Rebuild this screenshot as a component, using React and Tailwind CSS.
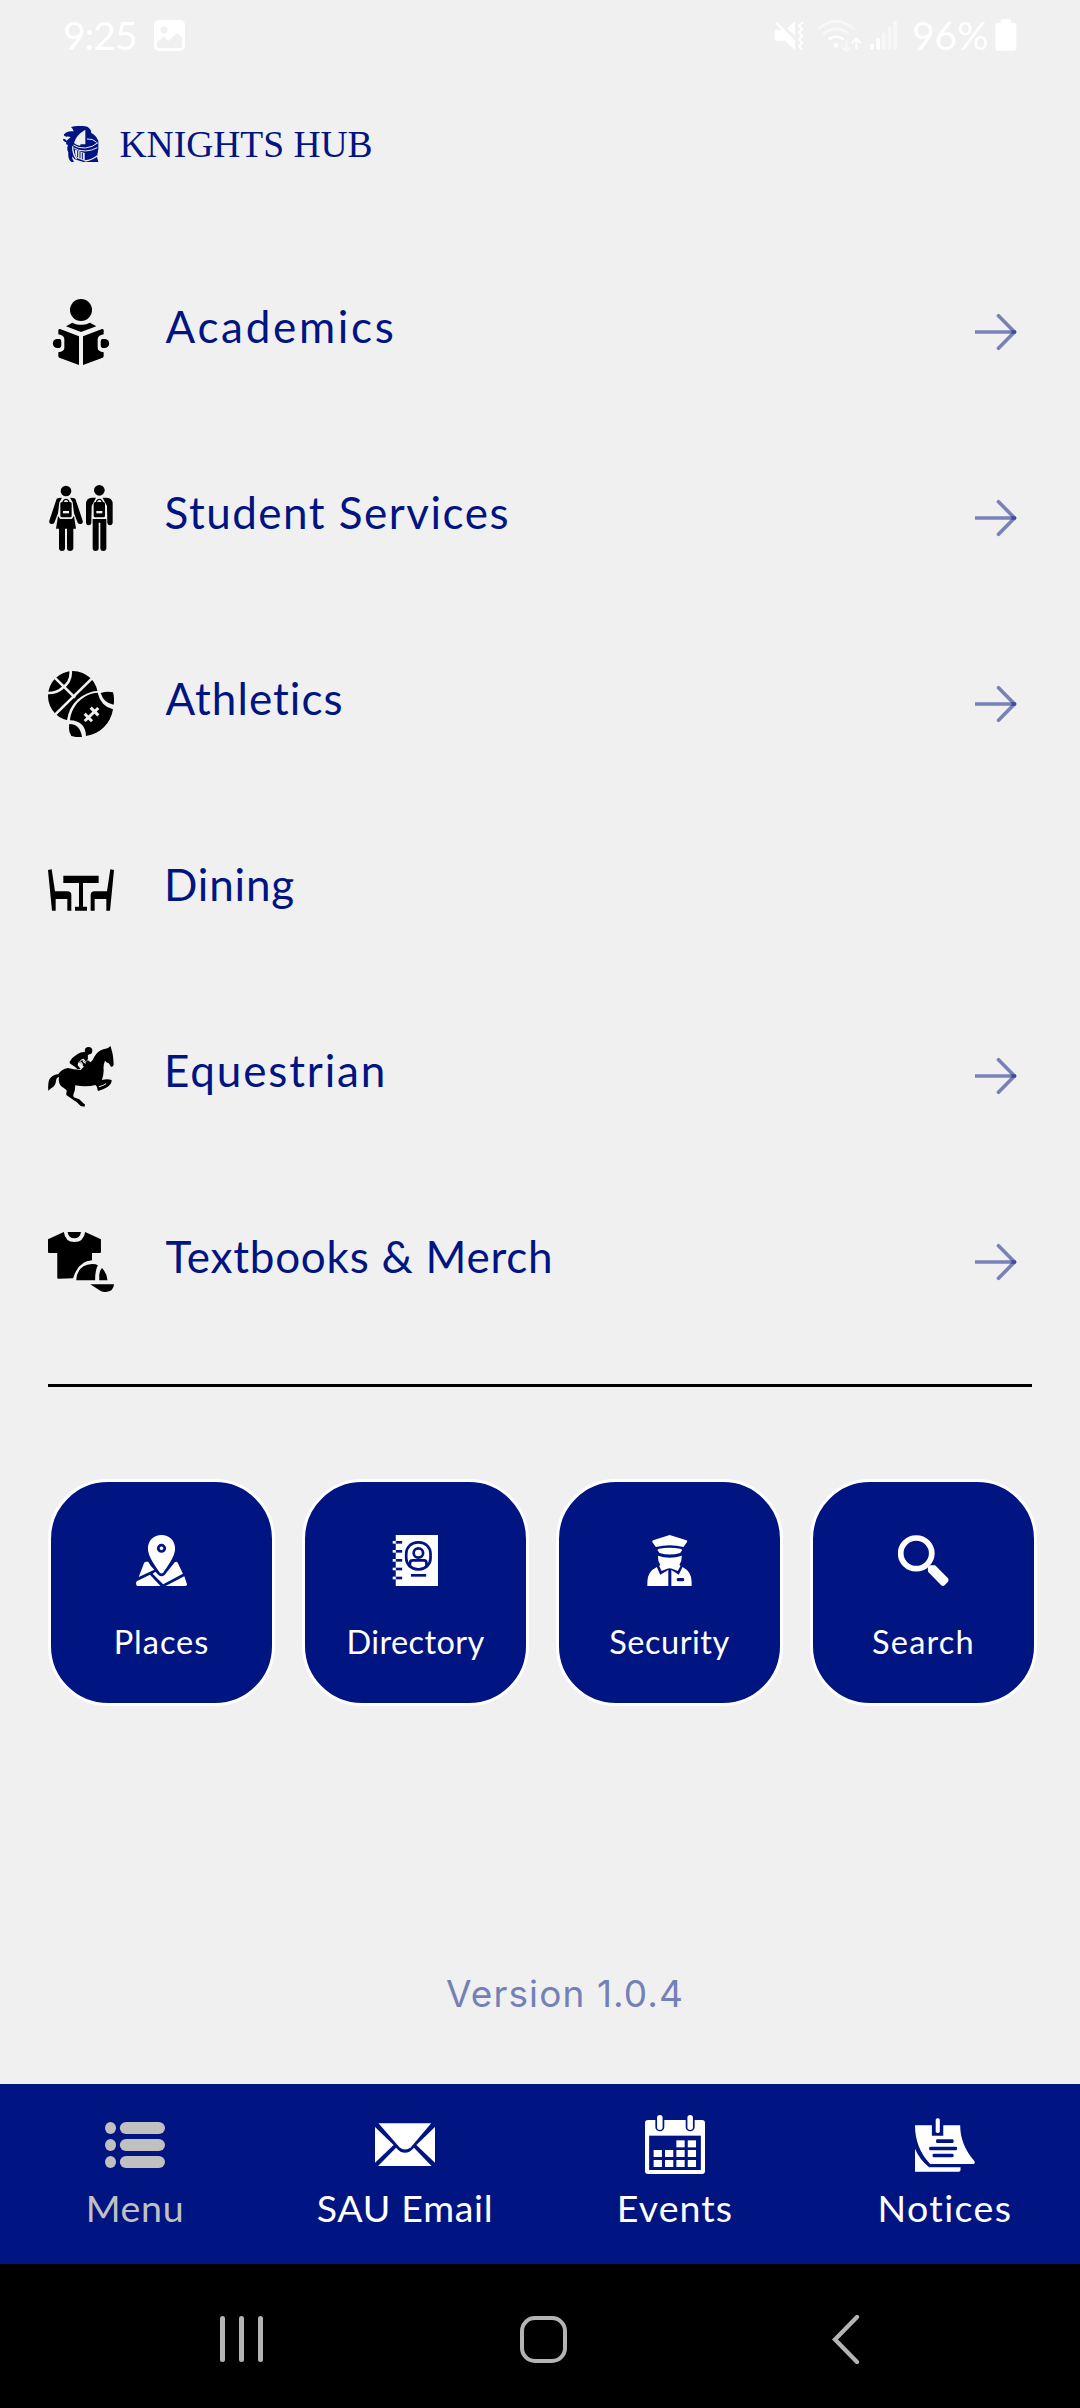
const BG = '#f0f0f0'
const NAVY = '#001482'

function ImageIcon() {
  return (
    <svg className="h-[31px] w-[31px]" viewBox="0 0 31 31">
      <rect width="31" height="31" rx="5" fill="#fff" />
      <circle cx="10" cy="10" r="3.5" fill={BG} />
      <path d="M3 22L10 16.5L14.500 21L23 13L28 17.500V26Q28 28 26 28H5Q3 28 3 26Z" fill={BG} />
    </svg>
  )
}

function MuteIcon() {
  return (
    <svg className="h-[31px] w-[30px]" viewBox="101 58 90 92" fill="#fff">
      <path d="M103 95Q103 87 110 87H125L164 126V147L133 120H110Q103 120 103 113Z" />
      <path d="M140 82L164 62V104Z" />
      <path d="M110 68L162 120" stroke="#fff" strokeWidth="6" strokeLinecap="round" />
      <path
        d="M186 65L176 75L186 85L176 95L186 105L176 116L186 126L176 136L184 144"
        fill="none"
        stroke="#fff"
        strokeWidth="6"
        strokeLinecap="round"
        strokeLinejoin="round"
      />
    </svg>
  )
}

function WifiIcon() {
  return (
    <svg className="h-[35px] w-[45px]" viewBox="231 50 135 104" fill="none" stroke="#fff" strokeWidth="8" strokeLinecap="round">
      <g opacity="0.5">
        <path d="M237 81Q288 37 340 81" />
        <path d="M252 97Q288 67 325 97" />
        <path d="M319 118V147M309 139L319 149L329 139" strokeWidth="7" />
      </g>
      <path d="M269 112Q288 98 308 112" />
      <circle cx="288" cy="131" r="7" fill="#fff" stroke="none" />
      <path d="M349 141V114M337 123L349 111L361 123" strokeWidth="6" />
    </svg>
  )
}

function SignalIcon() {
  return (
    <svg className="h-[31px] w-[28px]" viewBox="392 58 84 92" fill="#fff">
      <rect x="393" y="129" width="11" height="18" rx="4" />
      <rect x="411" y="112" width="11" height="35" rx="4" />
      <g opacity="0.5">
        <rect x="428" y="95" width="11" height="52" rx="4" />
        <rect x="445" y="76" width="11" height="71" rx="4" />
        <rect x="462" y="60" width="11" height="87" rx="4" />
      </g>
    </svg>
  )
}

function BatteryIcon() {
  return (
    <svg className="h-[32px] w-[22px]" viewBox="767 56 66 96" fill="#fff">
      <rect x="768" y="68" width="63" height="83" rx="8" />
      <rect x="784" y="57" width="32" height="16" rx="4" />
    </svg>
  )
}

function KnightLogo() {
  return (
    <svg className="h-[36px] w-[36px]" viewBox="39 47 108 108">
      <path
        d="M68 56L63 50Q90 44 112 49Q123 55 124 68Q139 76 145 92V116L141 140L145 154V156H66Q53 148 55 126Q49 116 54 104Q46 104 49 96Q39 93 39 87L49 79Q40 78 42 72Q52 60 71 63Z"
        fill={NAVY}
      />
      <g fill={BG}>
        <path d="M38 84Q50 75 62 80L50 91Q46 85 38 84Z" />
        <path d="M72 98Q78 74 106 58V102H92L90 106Q78 104 72 98Z" />
        <path d="M75 118L104 128V152L82 144Q74 134 75 118Z" />
        <path d="M72 155Q66 148 66 138L74 147L100 155Z" />
      </g>
      <g fill="none" stroke={BG}>
        <path d="M70 104Q84 114 106 113Q128 111 144 97" strokeWidth="3" />
        <path d="M72 113Q84 122 106 122Q126 121 142 112" strokeWidth="3" />
        <path d="M111 86Q128 84 140 96" strokeWidth="3" />
        <path d="M104 152Q126 149 142 136" strokeWidth="4" />
        <path d="M68 108Q68 134 80 146" strokeWidth="4" />
      </g>
      <path d="M83 121V141M90 124V144M97 127V147" fill="none" stroke={NAVY} strokeWidth="3" />
    </svg>
  )
}

function AcademicsIcon() {
  const half = (
    <>
      <path d="M90 147L147 169V255L88 233Q85 232 85 229V217Q103 214 103 204V177Q103 167 85 163V150Q86 146 90 147Z" />
      <path d="M82 177H89Q94 178 94 185V196Q94 203 89 204H82A13.500 13.500 0 0 1 82 177Z" />
    </>
  )
  return (
    <svg className="h-[66px] w-[66px]" viewBox="54 57 198 198">
      <circle cx="153" cy="90" r="33" />
      <path d="M108 139L127 128Q140 136 153 134Q166 136 180 128L199 139L153 156Z" />
      {half}
      <g transform="translate(306 0) scale(-1 1)">{half}</g>
    </svg>
  )
}

function Backpack({ cx }) {
  return (
    <g transform={`translate(${cx} 0)`}>
      <path d="M-17 716L-22 700L-15 668Q-12 656 0 656Q12 656 15 668L22 700L17 716Z" fill={BG} />
      <path d="M-9 667Q-7 658 0 658Q7 658 9 667" fill="none" stroke="#000" strokeWidth="4" />
      <rect x="-17" y="666" width="34" height="46" rx="5" />
      <rect x="-9" y="693" width="18" height="7" fill={BG} />
    </g>
  )
}

function StudentsIcon() {
  return (
    <svg className="h-[66px] w-[66px]" viewBox="54 615 198 198">
      <circle cx="108" cy="633" r="16" />
      <path d="M80 656Q84 653 96 653L88 667L84 700L73 728Q70 733 63 732Q56 730 58 722Z" />
      <path d="M136 656Q132 653 120 653L128 667L132 700L143 728Q146 733 153 732Q160 730 158 722Z" />
      <path d="M84 708L90 716H126L132 708L138 746H130V806Q128 813 120 813Q112 813 111 806V746H105V806Q104 813 96 813Q88 813 87 806V746H78Z" />
      <Backpack cx={108} />
      <circle cx="208" cy="631" r="16" />
      <path d="M198 653H186Q168 653 168 673V729Q169 736 176 736Q183 736 184 729L185 678Z" />
      <path d="M218 653H230Q248 653 248 673V729Q247 736 240 736Q233 736 232 729L231 678Z" />
      <path d="M188 717H229V806Q228 813 220 813Q212 813 211 806V728H206V806Q205 813 197 813Q189 813 188 806Z" />
      <Backpack cx={208} />
    </svg>
  )
}

function AthleticsIcon() {
  return (
    <svg className="h-[66px] w-[66px]" viewBox="54 63 198 198">
      <circle cx="129" cy="138" r="75" />
      <g fill="none" stroke={BG} strokeWidth="8">
        <path d="M74 83L135 143" />
        <path d="M186 85L76 193" />
        <path d="M122 61Q125 95 98 113Q80 130 52 129" />
      </g>
      <path
        d="M118 211C125 165 160 132 206 129L230 120L256 122L254 175C246 222 210 254 168 261L140 266L114 262Z"
        stroke={BG}
        strokeWidth="14"
        fill={BG}
      />
      <path d="M120 211C125 165 160 131 203 128Q212 168 249 178C242 222 210 252 168 258C168 230 150 211 120 211Z" />
      <path d="M212 129Q232 123 249 127Q254 145 251 164Q222 160 212 129Z" />
      <path d="M118 222Q150 222 156 261Q140 263 124 258Q114 245 118 222Z" />
      <g stroke={BG} strokeWidth="9">
        <path d="M164 213L205 174" />
        <path d="M164 191L186 214" />
        <path d="M182 173L205 196" />
      </g>
    </svg>
  )
}

function DiningIcon() {
  const chair = <path d="M54 660L65 658L75 724H112Q124 724 124 735V782H112V747H77V782H66Z" />
  return (
    <svg className="h-[66px] w-[66px]" viewBox="54 621 198 198">
      {chair}
      <g transform="translate(306 0) scale(-1 1)">{chair}</g>
      <path d="M100 677H206V699H159V770H171V782H135V770H147V699H100Z" />
    </svg>
  )
}

function EquestrianIcon() {
  return (
    <svg className="h-[66px] w-[66px]" viewBox="52 39 192 198" preserveAspectRatio="none">
      <path d="M234 48L237 60Q242 75 243 104Q241 112 235 110L229 100Q220 97 218 92Q212 105 214 120Q214 135 209 150Q225 145 237 150Q238 158 232 164Q222 176 197 183L195 173Q194 168 190 165Q165 172 131 166Q132 180 127 190Q124 196 127 202L143 208L152 217L160 224L158 230L147 228L136 217L106 196Q104 190 107 183Q105 178 98 174Q80 165 84 141Q76 142 75 155Q73 168 62 174L53 182Q51 165 55 150Q62 135 82 132Q92 117 110 114Q125 118 147 120L163 103Q180 98 186 82Q195 63 215 57Q225 58 234 48Z" />
      <path d="M200 170Q214 167 221 161" fill="none" stroke={BG} strokeWidth="3" />
      <circle cx="170" cy="62" r="11" />
      <path d="M164 67Q150 64 138 72Q122 82 115 95Q114 100 118 102L130 110L138 118L147 117L138 105L141 96L150 88L156 86L162 95L168 88V76L174 70Z" />
      <path d="M142 96L150 102L156 110L168 104L176 97L168 91L161 97L152 90Z" />
      <path d="M146 95L153 104M153 91Q155 97 162 100" fill="none" stroke={BG} strokeWidth="3" />
    </svg>
  )
}

function MerchIcon() {
  return (
    <svg className="h-[66px] w-[66px]" viewBox="52 597 192 198" preserveAspectRatio="none">
      <path d="M52 628L98 606Q102 636 129 636Q156 636 160 606L206 628V666Q206 669 203 669H180V691Q140 693 125 745L82 746Q79 746 79 743V669H55Q52 669 52 666Z" />
      <path d="M109 606H148Q145 625 129 625Q112 625 109 606Z" />
      <path d="M134 751Q137 705 180 702Q192 702 197 706Q189 720 189 751Z" />
      <path d="M201 751V735Q202 722 209 714Q223 728 225 751Z" />
      <path d="M175 763H244Q243 785 220 786Q210 786 204 782Z" />
    </svg>
  )
}

function PlacesIcon() {
  return (
    <svg className="h-[51px] w-[51px]" viewBox="314 495 150 153" preserveAspectRatio="none" fill="#fff">
      <path d="M338 578Q340 575 345 575H350Q357 590 368 599L322 621Z" />
      <path d="M316 634L355 614L386 648H317Q312 641 316 634Z" />
      <path d="M363 611L371 605L380 615Q389 623 398 615L428 577Q434 573 437 579L452 611L394 643Z" />
      <path d="M401 648L456 619L464 643Q464 648 459 648Z" />
      <path d="M389 495C412 495 429 512 429 536C429 560 405 590 395 607Q389 614 383 607C373 590 349 560 349 536C349 512 366 495 389 495Z" />
      <circle cx="389" cy="535" r="9.500" fill="none" stroke={NAVY} strokeWidth="8" />
    </svg>
  )
}

function DirectoryIcon() {
  return (
    <svg className="h-[51px] w-[51px]" viewBox="1065 495 151 153" preserveAspectRatio="none" fill="#fff">
      <rect x="1082" y="495" width="125" height="153" />
      {[517, 544, 571, 597, 624].map((y) => (
        <g key={y}>
          <rect x="1073" y={y - 4} width="9" height="8" />
          <rect x="1083" y={y - 4} width="18" height="8" fill={NAVY} />
        </g>
      ))}
      <g fill="none" stroke={NAVY} strokeWidth="8">
        <rect x="1113" y="517" width="72" height="81" rx="34" />
        <circle cx="1149" cy="549" r="14" />
        <path d="M1124 592V580Q1124 571 1132 571H1166Q1173 571 1173 580V592" />
      </g>
      <rect x="1127" y="612" width="45" height="8" fill={NAVY} />
    </svg>
  )
}

function SecurityIcon() {
  return (
    <svg className="h-[51px] w-[51px]" viewBox="277 495 151 153" preserveAspectRatio="none" fill="#fff">
      <path d="M353 495L403 511Q407 513 404 517L394 531Q353 520 312 531L302 517Q300 513 304 511Z" />
      <path d="M317 541Q317 536 322 536Q353 530 384 536Q389 537 390 541L384 549Q353 558 323 549Z" />
      <path d="M318 557Q353 569 389 557Q389 573 382 584L385 588L377 603L362 597Q353 592 344 597L329 603L322 588L325 584Q318 573 318 557Z" />
      <path d="M315 591L325 614L349 600V648H287V635Q287 605 315 591Z" />
      <path d="M391 591L380 614L358 600V648H418V635Q418 605 391 591Z" />
      <rect x="374" y="624" width="22" height="10" rx="4" fill={NAVY} />
    </svg>
  )
}

function SearchIcon() {
  return (
    <svg className="h-[51px] w-[51px]" viewBox="1033 495 151 153" preserveAspectRatio="none" fill="#fff">
      <circle cx="1087" cy="550" r="46" fill="none" stroke="#fff" strokeWidth="17" />
      <path d="M1121 590L1129 586L1143 586L1181 625Q1184 630 1181 635L1171 646Q1166 650 1161 646L1122 605Z" />
    </svg>
  )
}

function MenuIcon() {
  return (
    <svg className="h-[60px] w-[60px]" viewBox="305 135 174 180" preserveAspectRatio="none" fill="#c0c0c0">
      {[174, 225, 276].map((y) => (
        <g key={y}>
          <ellipse cx="321" cy={y} rx="16" ry="18" />
          <rect x="348" y={y - 18} width="131" height="36" rx="18" />
        </g>
      ))}
    </svg>
  )
}

function EmailIcon() {
  return (
    <svg className="h-[60px] w-[60px]" viewBox="1089 135 174 180" preserveAspectRatio="none" fill="#fff">
      <path d="M1099 160H1252L1193 232Q1176 245 1160 232Z" />
      <path d="M1089 171L1143 225L1089 278Z" />
      <path d="M1263 171L1209 225L1263 278Z" />
      <path d="M1098 288L1150 233Q1176 264 1202 233L1253 288Z" />
    </svg>
  )
}

// Filled day cells, column starts for each week row
const DAY_CELLS = [
  { y: 211, cols: [396, 429] },
  { y: 240, cols: [330, 363, 396, 429] },
  { y: 270, cols: [330, 363, 396, 429] },
]

function EventsIcon() {
  return (
    <svg className="h-[60px] w-[60px]" viewBox="305 135 174 180" preserveAspectRatio="none" fill="#fff">
      <rect x="305" y="150" width="174" height="162" rx="9" />
      <rect x="317" y="197" width="150" height="103" fill={NAVY} />
      {[348, 436].map((x) => (
        <g key={x}>
          <rect x={x - 13} y="135" width="26" height="49" rx="13" fill={NAVY} />
          <rect x={x - 8} y="135" width="16" height="45" rx="8" />
        </g>
      ))}
      {DAY_CELLS.map(({ y, cols }) => cols.map((x) => <rect key={`${x}-${y}`} x={x} y={y} width="24" height="21" />))}
    </svg>
  )
}

function NoticesIcon() {
  return (
    <svg className="h-[60px] w-[60px]" viewBox="1089 135 174 180" preserveAspectRatio="none" fill="#fff">
      <path d="M1089 166H1138V197H1171V166H1220Q1220 225 1261 273Q1265 280 1258 282H1133Q1089 235 1089 166Z" />
      <path d="M1089 236Q1102 268 1130 292H1221V300Q1221 305 1216 305H1089Z" />
      <rect x="1149" y="145" width="12" height="44" rx="5" />
      <g fill={NAVY}>
        <rect x="1150" y="208" width="51" height="11" rx="4" />
        <rect x="1130" y="230" width="81" height="11" rx="4" />
        <rect x="1140" y="251" width="61" height="11" rx="4" />
      </g>
    </svg>
  )
}

function ArrowIcon() {
  return (
    <svg className="h-[42px] w-[42px]" viewBox="0 0 42 42" fill="none" stroke={NAVY} strokeOpacity="0.5" strokeWidth="3.600">
      <path d="M0 21H41" />
      <path d="M23.500 4.700L39.500 21L23.500 37.300" strokeLinecap="round" />
    </svg>
  )
}

const LINKS = [
  { label: 'Academics', Icon: AcademicsIcon, text: 'ml-[51.500px] tracking-[2.7px]', arrow: true },
  { label: 'Student Services', Icon: StudentsIcon, text: 'ml-[50.500px] tracking-[1.5px]', arrow: true },
  { label: 'Athletics', Icon: AthleticsIcon, text: 'ml-[51.500px] tracking-[1.05px]', arrow: true },
  { label: 'Dining', Icon: DiningIcon, text: 'ml-[50px] tracking-[0.8px]', arrow: false },
  { label: 'Equestrian', Icon: EquestrianIcon, text: 'ml-[50px] tracking-[1.85px]', arrow: true },
  { label: 'Textbooks & Merch', Icon: MerchIcon, text: 'ml-[51.500px] tracking-[0.75px]', arrow: true },
]

const TILES = [
  { label: 'Places', Icon: PlacesIcon, text: 'tracking-[1px]' },
  { label: 'Directory', Icon: DirectoryIcon, text: 'tracking-[0.4px]' },
  { label: 'Security', Icon: SecurityIcon, text: 'tracking-[0.5px]' },
  { label: 'Search', Icon: SearchIcon, text: 'tracking-[1.2px]' },
]

const TABS = [
  { label: 'Menu', Icon: MenuIcon, text: 'text-[#c0c0c0] tracking-[0.7px]' },
  { label: 'SAU Email', Icon: EmailIcon, text: 'text-white tracking-[0.7px]' },
  { label: 'Events', Icon: EventsIcon, text: 'text-white tracking-[1.1px]' },
  { label: 'Notices', Icon: NoticesIcon, text: 'text-white tracking-[1.4px]' },
]

function StatusBar() {
  return (
    <div className="flex h-[70px] items-center justify-between pr-[63px] pl-[63px] text-[39px] leading-none text-white">
      <div className="flex items-center gap-[18px]">
        <span className="w-[73px] tracking-[-1px]">9:25</span>
        <ImageIcon />
      </div>
      <div className="flex items-center">
        <MuteIcon />
        <span className="ml-[13px]"><WifiIcon /></span>
        <span className="ml-[8px]"><SignalIcon /></span>
        <span className="ml-[14px] w-[77px]">96%</span>
        <span className="ml-[6px]"><BatteryIcon /></span>
      </div>
    </div>
  )
}

function LinkRow({ label, Icon, text, arrow }) {
  return (
    <div className="flex h-[186px] items-center pr-[63px] pl-12">
      <Icon />
      <span className={`pb-[12px] text-[44px] leading-[52px] whitespace-nowrap text-[#001482] ${text}`}>{label}</span>
      {arrow && <span className="ml-auto"><ArrowIcon /></span>}
    </div>
  )
}

function Tile({ label, Icon, text }) {
  return (
    <div className="flex h-[227px] w-[227px] flex-col items-center rounded-[60px] border-[3px] border-white bg-[#001482] pt-[53px]">
      <Icon />
      <span className={`mt-[36px] text-[32.500px] leading-[39px] text-white ${text}`}>{label}</span>
    </div>
  )
}

function SystemNav() {
  return (
    <div className="flex h-36 items-center bg-black pt-[6px] pl-[220px]">
      <div className="flex gap-[14.500px]">
        <span className="h-[46px] w-[4.500px] rounded-full bg-[#b4b4b4]" />
        <span className="h-[46px] w-[4.500px] rounded-full bg-[#b4b4b4]" />
        <span className="h-[46px] w-[4.500px] rounded-full bg-[#b4b4b4]" />
      </div>
      <span className="ml-[257.500px] h-[47px] w-[47px] rounded-[15px] border-[4px] border-[#b4b4b4]" />
      <svg className="ml-[265px] h-[49px] w-[28px]" viewBox="0 0 28 49" fill="none" stroke="#b4b4b4" strokeWidth="4.300">
        <path d="M25 2L3 24.500L25 47" strokeLinecap="round" />
      </svg>
    </div>
  )
}

export default function App() {
  return (
    <div className="flex h-[2408px] w-[1080px] flex-col overflow-hidden bg-[#f0f0f0] font-['Lato',sans-serif]">
      <StatusBar />

      <header className="flex h-[169px] items-start pt-[56px] pl-[63px]">
        <KnightLogo />
        <h1 className="mt-[-3px] ml-[20.500px] font-['Liberation_Serif',serif] text-[37.500px] leading-[43px] whitespace-nowrap text-[#001482]">
          KNIGHTS HUB
        </h1>
      </header>

      <nav>
        {LINKS.map((link) => (
          <LinkRow key={link.label} {...link} />
        ))}
      </nav>

      <div className="mx-12 mt-[29px] h-[3px] shrink-0 bg-black" />

      <div className="mt-[92px] flex gap-[27px] pl-12">
        {TILES.map((tile) => (
          <Tile key={tile.label} {...tile} />
        ))}
      </div>

      <p className="mt-auto mb-[68px] pl-[446px] font-['Inter',sans-serif] text-[37px] leading-[44px] tracking-[1.1px] text-[#7480b8]">
        Version 1.0.4
      </p>

      <div className="grid h-[180px] shrink-0 grid-cols-4 bg-[#001482]">
        {TABS.map(({ label, Icon, text }) => (
          <div key={label} className="flex flex-col items-center pt-[31px]">
            <Icon />
            <span className={`mt-[10px] text-[37.500px] leading-[45px] whitespace-nowrap ${text}`}>{label}</span>
          </div>
        ))}
      </div>

      <SystemNav />
    </div>
  )
}
